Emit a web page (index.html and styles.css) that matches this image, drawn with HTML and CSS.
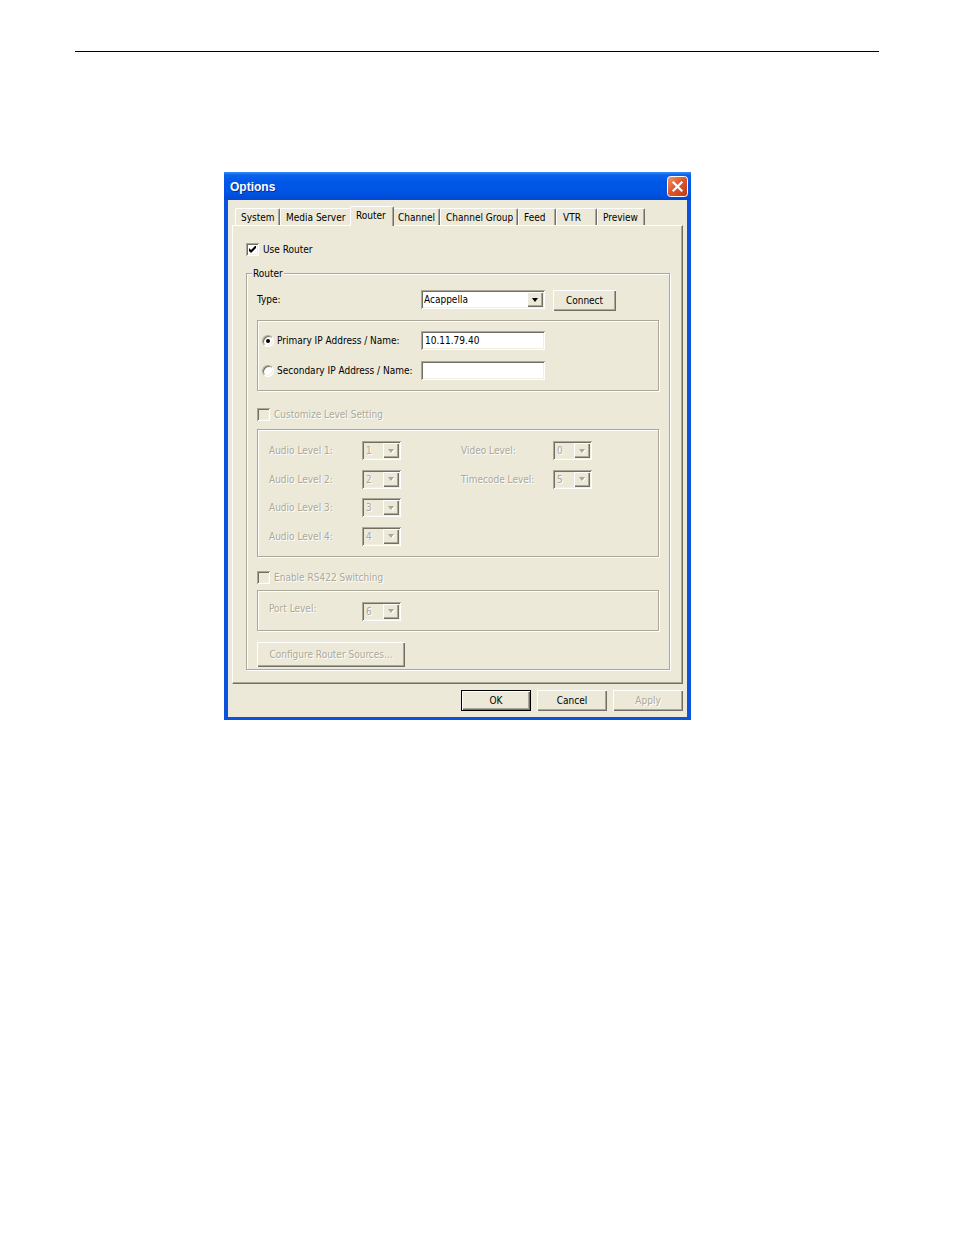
FILE: index.html
```html
<!DOCTYPE html>
<html lang="en">
<head>
  <meta charset="UTF-8">
  <title>Options</title>
  <link rel="stylesheet" href="styles.css">
</head>
<body>
  <div class="page-rule"></div>

  <div class="window">
    <div class="titlebar">
      <span class="title">Options</span>
      <span class="close-btn">
        <svg width="21" height="21" viewBox="0 0 21 21">
          <defs>
            <linearGradient id="closeGrad" x1="0" y1="0" x2="1" y2="1">
              <stop offset="0" stop-color="#f39a74"/>
              <stop offset="0.45" stop-color="#e0582f"/>
              <stop offset="1" stop-color="#c23714"/>
            </linearGradient>
          </defs>
          <rect x="0.5" y="0.5" width="20" height="20" rx="3" fill="url(#closeGrad)" stroke="#fff"/>
          <path d="M6.5 6.5L14.5 14.5M14.5 6.5L6.5 14.5" stroke="#fff" stroke-width="2.2" stroke-linecap="square"/>
        </svg>
      </span>
    </div>

    <div class="window-body">
      <div class="tabs">
        <span class="tab tab-system">System</span>
        <span class="tab tab-media">Media Server</span>
        <span class="tab active">Router</span>
        <span class="tab tab-channel">Channel</span>
        <span class="tab tab-group">Channel Group</span>
        <span class="tab tab-feed">Feed</span>
        <span class="tab tab-vtr">VTR</span>
        <span class="tab tab-preview">Preview</span>
      </div>

      <div class="tab-page">
        <div class="check-row">
          <span class="checkbox">
            <svg width="7" height="7" viewBox="0 0 7 7"><path d="M0 2L2 4L7 -1V2L2 7L0 5Z" fill="#000"/></svg>
          </span>
          <span>Use Router</span>
        </div>

        <fieldset class="group">
          <legend>Router</legend>

          <div class="type-row">
            <span class="type-label">Type:</span>
            <div class="combo">
              <span class="combo-value">Acappella</span>
              <span class="combo-btn"><span class="arrow"></span></span>
            </div>
            <span class="btn connect">Connect</span>
          </div>

          <div class="box ip-box">
            <div class="ip-row">
              <span class="radio-label"><span class="radio on"></span>Primary IP Address / Name:</span>
              <span class="field">10.11.79.40</span>
            </div>
            <div class="ip-row">
              <span class="radio-label"><span class="radio"></span>Secondary IP Address / Name:</span>
              <span class="field"></span>
            </div>
          </div>

          <div class="check-row disabled customize-row">
            <span class="checkbox"></span>
            <span>Customize Level Setting</span>
          </div>

          <div class="box level-box">
            <div class="levels">
              <div class="level-col">
                <span class="lvl-label">Audio Level 1:</span>
                <div class="combo off"><span class="combo-value">1</span><span class="combo-btn"><span class="arrow"></span></span></div>
                <span class="lvl-label">Audio Level 2:</span>
                <div class="combo off"><span class="combo-value">2</span><span class="combo-btn"><span class="arrow"></span></span></div>
                <span class="lvl-label">Audio Level 3:</span>
                <div class="combo off"><span class="combo-value">3</span><span class="combo-btn"><span class="arrow"></span></span></div>
                <span class="lvl-label">Audio Level 4:</span>
                <div class="combo off"><span class="combo-value">4</span><span class="combo-btn"><span class="arrow"></span></span></div>
              </div>
              <div class="level-col right">
                <span class="lvl-label">Video Level:</span>
                <div class="combo off"><span class="combo-value">0</span><span class="combo-btn"><span class="arrow"></span></span></div>
                <span class="lvl-label">Timecode Level:</span>
                <div class="combo off"><span class="combo-value">5</span><span class="combo-btn"><span class="arrow"></span></span></div>
              </div>
            </div>
          </div>

          <div class="check-row disabled rs422-row">
            <span class="checkbox"></span>
            <span>Enable RS422 Switching</span>
          </div>

          <div class="box port-box">
            <div class="level-col">
              <span class="lvl-label port-label">Port Level:</span>
              <div class="combo off"><span class="combo-value">6</span><span class="combo-btn"><span class="arrow"></span></span></div>
            </div>
          </div>

          <span class="btn disabled configure">Configure Router Sources...</span>
        </fieldset>
      </div>

      <div class="button-row">
        <span class="btn default">OK</span>
        <span class="btn">Cancel</span>
        <span class="btn disabled">Apply</span>
      </div>
    </div>
  </div>
</body>
</html>
```

FILE: styles.css
```css
body {
  margin: 0;
  background: #fff;
  font-family: "DejaVu Sans Condensed", "Liberation Sans", sans-serif;
  font-size: 10px;
  color: #000;
}

.page-rule {
  margin: 51px 75px 0;
  border-top: 1px solid #000;
}

/* window frame */
.window {
  width: 467px;
  margin: 120px 0 0 224px;
}
.titlebar {
  height: 28px;
  box-sizing: border-box;
  display: flex;
  align-items: center;
  justify-content: space-between;
  padding: 2px 3px 0 6px;
  background: linear-gradient(#3d8df5 0, #0a62ec 3px, #0058e8 10px, #0054e3 20px, #0049d4 28px);
}
.title {
  font-family: "Liberation Sans", sans-serif;
  font-weight: bold;
  font-size: 12px;
  color: #fff;
  text-shadow: 1px 1px #0a2a9a;
}
.close-btn {
  display: flex;
  margin-top: -1px;
}
.window-body {
  background: #ece9d8;
  border: 4px solid #0b52dc;
  border-top: 0;
  border-bottom-width: 3px;
  padding: 6px 0 6px;
}

/* tabs */
.tabs {
  display: flex;
  align-items: flex-end;
  height: 19px;
  padding-left: 7px;
}
.tab {
  height: 17px;
  box-sizing: border-box;
  display: flex;
  align-items: center;
  padding: 0 0 0 5px;
  border: 1px solid;
  border-bottom: 0;
  border-color: #fff #716f64 transparent #fff;
  border-radius: 2px 2px 0 0;
  box-shadow: inset -1px 0 #aca899;
  white-space: nowrap;
}
.tab-system { width: 45px; }
.tab-media { width: 72px; }
.tab-channel { width: 48px; padding-left: 5px; }
.tab-group { width: 78px; }
.tab-feed { width: 38px; }
.tab-vtr { width: 41px; padding-left: 6px; }
.tab-preview { width: 48px; }
.tab.active {
  position: relative;
  z-index: 1;
  width: 44px;
  height: 20px;
  margin: 0 -2px -1px;
  padding: 0 0 2px 5px;
  background: #ece9d8;
}

.tab-page {
  height: 459px;
  box-sizing: border-box;
  margin: 0 4px;
  border: 1px solid;
  border-color: #fff #716f64 #716f64 #fff;
  box-shadow: inset -1px -1px #aca899;
  padding: 17px 12px 0 13px;
}

/* checkboxes & radios */
.check-row {
  display: flex;
  align-items: center;
  gap: 4px;
  height: 13px;
}
.checkbox {
  width: 13px;
  height: 13px;
  box-sizing: border-box;
  display: flex;
  align-items: center;
  justify-content: center;
  background: #fff;
  box-shadow: inset 1px 1px #aca899, inset -1px -1px #fff, inset 2px 2px #716f64, inset -2px -2px #f1efe2;
}
.disabled .checkbox {
  background: #ece9d8;
}
.disabled,
.btn.disabled,
.box.level-box,
.box.port-box {
  color: #aca899;
  text-shadow: 1px 1px #fff;
}
.customize-row {
  margin-top: 17px;
}
.rs422-row {
  margin-top: 14px;
}

.radio {
  width: 12px;
  height: 12px;
  box-sizing: border-box;
  display: inline-flex;
  align-items: center;
  justify-content: center;
  border-radius: 50%;
  border: 1px solid;
  border-color: #aca899 #fff #fff #aca899;
  box-shadow: inset 1px 1px #716f64, inset -1px -1px #f1efe2;
  background: #fff;
  margin-right: 3px;
}
.radio.on::after {
  content: "";
  width: 4px;
  height: 4px;
  border-radius: 50%;
  background: #000;
}

/* group boxes */
.group {
  margin: 11px 0 0;
  padding: 0 10px 2px;
  border: 1px solid #aca899;
  box-shadow: inset 1px 1px #fff, 1px 1px #fff;
  min-width: 0;
}
.group legend {
  margin-left: -5px;
  padding: 0 1px;
  line-height: 13px;
  background: #ece9d8;
}
.box {
  border: 1px solid #aca899;
  box-shadow: inset 1px 1px #fff, 1px 1px #fff;
}

.type-row {
  display: flex;
  align-items: flex-start;
  margin-top: 10px;
  height: 21px;
}
.type-label {
  width: 164px;
  line-height: 19px;
}
.connect {
  margin-left: 8px;
  width: 63px;
}

.ip-box {
  margin-top: 9px;
  padding: 10px 0 10px 4px;
  display: flex;
  flex-direction: column;
  gap: 11px;
}
.ip-row {
  display: flex;
  align-items: center;
  height: 19px;
}
.radio-label {
  width: 159px;
  display: flex;
  align-items: center;
}

/* sunken fields */
.field,
.combo {
  width: 124px;
  height: 19px;
  box-sizing: border-box;
  background: #fff;
  box-shadow: inset 1px 1px #aca899, inset -1px -1px #fff, inset 2px 2px #716f64, inset -2px -2px #f1efe2;
}
.field {
  padding-left: 4px;
  line-height: 19px;
}
.combo {
  display: flex;
  align-items: center;
  padding: 2px;
}
.combo-value {
  flex: 1;
  padding-left: 1px;
}
.combo-btn {
  width: 16px;
  height: 15px;
  box-sizing: border-box;
  display: flex;
  align-items: center;
  justify-content: center;
  background: #ece9d8;
  box-shadow: inset 1px 1px #fff, inset -1px -1px #716f64, inset -2px -2px #aca899;
}
.arrow {
  width: 0;
  height: 0;
  border-left: 3.5px solid transparent;
  border-right: 3.5px solid transparent;
  border-top: 4px solid #000;
}
.combo.off {
  width: 39px;
  background: #ece9d8;
}
.combo.off .combo-value {
  padding-left: 2px;
}
.combo.off .arrow {
  border-top-color: #aca899;
  filter: drop-shadow(1px 1px 0 #fff);
}

/* level settings */
.level-box {
  margin-top: 8px;
  padding: 11px 0 10px 11px;
}
.levels {
  display: flex;
}
.level-col {
  display: grid;
  grid-template-columns: 93px 39px;
  row-gap: 9.67px;
  align-items: center;
  align-content: start;
}
.level-col.right {
  margin-left: 60px;
  grid-template-columns: 92px 39px;
}
.lvl-label {
  line-height: 19px;
}
.port-box {
  margin-top: 6px;
  padding: 11px 0 9px 11px;
}
.port-label {
  align-self: start;
  line-height: 13px;
}

/* buttons */
.btn {
  height: 21px;
  box-sizing: border-box;
  display: inline-flex;
  align-items: center;
  justify-content: center;
  background: #ece9d8;
  box-shadow: inset 1px 1px #fff, inset -1px -1px #716f64, inset -2px -2px #aca899;
}
.btn.default {
  border: 1px solid #000;
}
.configure {
  margin-top: 11px;
  width: 148px;
  height: 25px;
}
.button-row {
  display: flex;
  justify-content: flex-end;
  gap: 6px;
  margin: 6px 4px 0;
}
.button-row .btn {
  width: 70px;
}
```
